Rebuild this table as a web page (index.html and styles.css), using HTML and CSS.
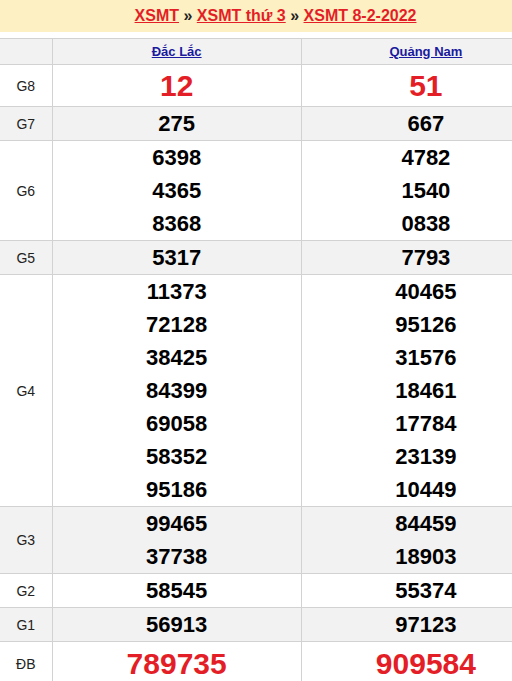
FILE: index.html
```html
<!DOCTYPE html>
<html lang="vi">
<head>
<meta charset="utf-8">
<title>XSMT 8-2-2022</title>
<link rel="stylesheet" href="styles.css">
</head>
<body>
<div class="page">
 <div class="inner">
  <div class="crumb">
    <a href="#">XSMT</a> <span class="sep">»</span> <a href="#">XSMT thứ 3</a> <span class="sep">»</span> <a href="#">XSMT 8-2-2022</a>
  </div>
  <table class="kq">
    <colgroup><col class="c-lbl"><col class="c-prov"><col class="c-prov"></colgroup>
    <thead>
      <tr class="alt head"><th></th><th><a href="#">Đắc Lắc</a></th><th><a href="#">Quảng Nam</a></th></tr>
    </thead>
    <tbody>
      <tr class="g8"><td class="lbl">G8</td><td><div class="n big">12</div></td><td><div class="n big">51</div></td></tr>
      <tr class="alt"><td class="lbl">G7</td><td><div class="n">275</div></td><td><div class="n">667</div></td></tr>
      <tr><td class="lbl">G6</td><td><div class="n">6398</div><div class="n">4365</div><div class="n">8368</div></td><td><div class="n">4782</div><div class="n">1540</div><div class="n">0838</div></td></tr>
      <tr class="alt"><td class="lbl">G5</td><td><div class="n">5317</div></td><td><div class="n">7793</div></td></tr>
      <tr><td class="lbl">G4</td>
        <td><div class="n">11373</div><div class="n">72128</div><div class="n">38425</div><div class="n">84399</div><div class="n">69058</div><div class="n">58352</div><div class="n">95186</div></td>
        <td><div class="n">40465</div><div class="n">95126</div><div class="n">31576</div><div class="n">18461</div><div class="n">17784</div><div class="n">23139</div><div class="n">10449</div></td></tr>
      <tr class="alt"><td class="lbl">G3</td><td><div class="n">99465</div><div class="n">37738</div></td><td><div class="n">84459</div><div class="n">18903</div></td></tr>
      <tr><td class="lbl">G2</td><td><div class="n">58545</div></td><td><div class="n">55374</div></td></tr>
      <tr class="alt"><td class="lbl">G1</td><td><div class="n">56913</div></td><td><div class="n">97123</div></td></tr>
      <tr class="db"><td class="lbl">ĐB</td><td><div class="n big">789735</div></td><td><div class="n big">909584</div></td></tr>
    </tbody>
  </table>
 </div>
</div>
</body>
</html>
```

FILE: styles.css
```css
html, body {
  margin: 0;
  padding: 0;
  overflow: hidden;
  background: #fff;
}
body {
  font-family: "Liberation Sans", Arial, sans-serif;
  color: #000;
}
.page {
  width: 512px;
  overflow: hidden;
}
.inner {
  width: 551px;
}
.crumb {
  background: #fdf1c4;
  height: 32px;
  line-height: 31px;
  text-align: center;
  font-size: 16px;
  font-weight: bold;
  margin-bottom: 6px;
}
.crumb a {
  color: #e41e26;
  text-decoration: underline;
}
.crumb .sep {
  color: #222;
}
.kq {
  width: 551px;
  border-collapse: collapse;
  table-layout: fixed;
}
.c-lbl { width: 52px; }
.c-prov { width: 249px; }
.kq th, .kq td {
  border: 1px solid #d2d2d2;
  padding: 0;
  text-align: center;
  vertical-align: middle;
}
.kq tr > :first-child {
  border-left: none;
}
.kq th {
  height: 25px;
  font-size: 13px;
  font-weight: bold;
}
.kq th a {
  color: #1a1a9e;
  text-decoration: underline;
}
.alt {
  background: #f2f2f2;
}
.lbl {
  font-size: 14px;
  color: #222;
}
.n {
  font-size: 22px;
  font-weight: bold;
  line-height: 33px;
}
.n.big {
  font-size: 30px;
  color: #e41e26;
  line-height: 41px;
}
.db .n.big {
  line-height: 44px;
}
```
